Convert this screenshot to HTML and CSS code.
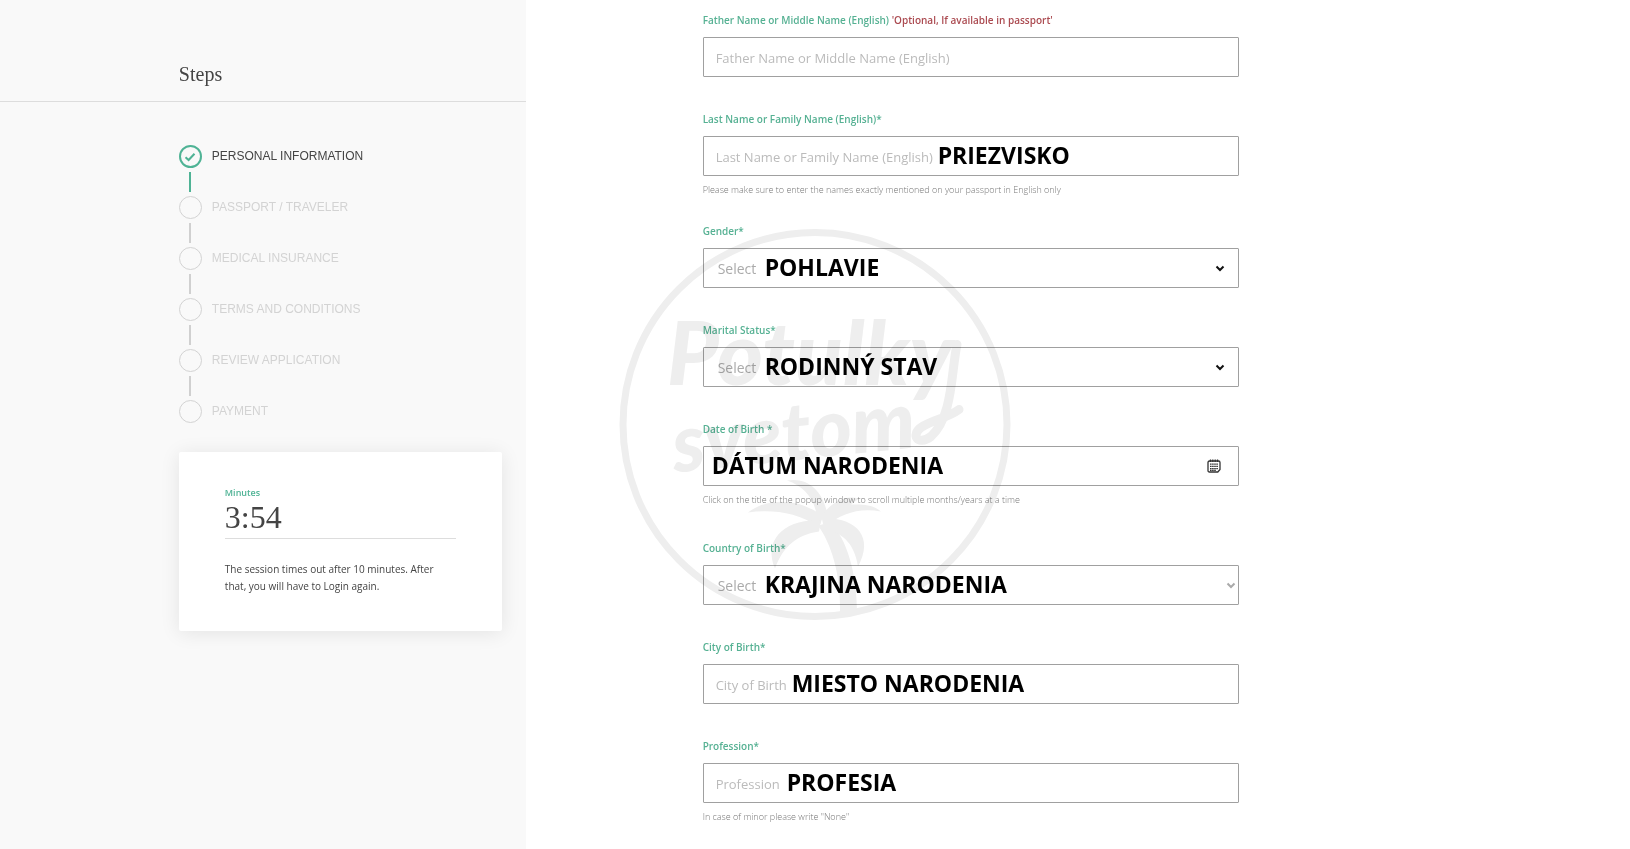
FILE: index.html
```html
<!DOCTYPE html>
<html lang="en">
<head>
<meta charset="utf-8">
<title>Personal Information</title>
<link rel="stylesheet" href="styles.css">
</head>
<body>
<div class="page">
  <aside class="sidebar">
    <header class="sidebar-header"><h1 class="sidebar-title">Steps</h1></header>
    <div class="sidebar-body">
      <ol class="steps">
        <li class="step step-active">
          <span class="step-dot"><svg class="step-check" viewBox="0 0 12 10"><path d="M1.5 5.2 4.6 8 10.5 1.8"/></svg></span>
          <span class="step-name">PERSONAL INFORMATION</span>
        </li>
        <li class="step"><span class="step-dot"></span><span class="step-name">PASSPORT / TRAVELER</span></li>
        <li class="step"><span class="step-dot"></span><span class="step-name">MEDICAL INSURANCE</span></li>
        <li class="step"><span class="step-dot"></span><span class="step-name">TERMS AND CONDITIONS</span></li>
        <li class="step"><span class="step-dot"></span><span class="step-name">REVIEW APPLICATION</span></li>
        <li class="step"><span class="step-dot"></span><span class="step-name">PAYMENT</span></li>
      </ol>
      <section class="timer">
        <div class="timer-label">Minutes</div>
        <div class="timer-value">3:54</div>
        <p class="timer-note">The session times out after 10 minutes. After that, you will have to Login again.</p>
      </section>
    </div>
  </aside>

  <main class="content">
    <form class="form">
      <div class="field">
        <label class="label" for="father">Father Name or Middle Name (English) <span class="optional">'Optional, If available in passport'</span></label>
        <div class="control"><input class="input" id="father" type="text" placeholder="Father Name or Middle Name (English)"></div>
      </div>
      <div class="field field-tight">
        <label class="label" for="last">Last Name or Family Name (English)*</label>
        <div class="control"><input class="input" id="last" type="text" placeholder="Last Name or Family Name (English)"><span class="note note-last">PRIEZVISKO</span></div>
        <p class="hint">Please make sure to enter the names exactly mentioned on your passport in English only</p>
      </div>
      <div class="field">
        <label class="label" for="gender">Gender*</label>
        <div class="control">
          <select class="input select" id="gender"><option>Select</option></select><span class="note note-select">POHLAVIE</span>
          <svg class="chevron" viewBox="0 0 10 7"><path d="M1.5 1.5 5 5 8.5 1.5"/></svg>
        </div>
      </div>
      <div class="field">
        <label class="label" for="marital">Marital Status*</label>
        <div class="control">
          <select class="input select" id="marital"><option>Select</option></select><span class="note note-select">RODINNÝ STAV</span>
          <svg class="chevron" viewBox="0 0 10 7"><path d="M1.5 1.5 5 5 8.5 1.5"/></svg>
        </div>
      </div>
      <div class="field field-hinted">
        <label class="label" for="dob">Date of Birth *</label>
        <div class="control">
          <input class="input" id="dob" type="text"><span class="note note-date">DÁTUM NARODENIA</span>
          <button class="calendar" type="button" aria-label="Open calendar">
            <svg class="calendar-icon" viewBox="0 0 14 14">
              <path class="calendar-frame" d="M2.5 2h9Q13 2 13 3.500V10.500L10.800 13H2.500Q1 13 1 11.500V3.500Q1 2 2.500 2Z"/>
              <path class="calendar-frame" d="M3.500 .5v2.500M5.800 .5v2.500M8.200 .5v2.500M10.500 .5v2.500"/>
              <path class="calendar-days" d="M3 5.200h8M3 7.400h8M3 9.600h8M3 11.300h6"/>
            </svg>
          </button>
        </div>
        <p class="hint">Click on the title of the popup window to scroll multiple months/years at a time</p>
      </div>
      <div class="field">
        <label class="label" for="country">Country of Birth*</label>
        <div class="control">
          <select class="input select" id="country"><option>Select</option></select><span class="note note-select">KRAJINA NARODENIA</span>
          <svg class="chevron chevron-edge" viewBox="0 0 10 7"><path d="M1.5 1.5 5 5 8.5 1.5"/></svg>
        </div>
      </div>
      <div class="field">
        <label class="label" for="city">City of Birth*</label>
        <div class="control"><input class="input" id="city" type="text" placeholder="City of Birth"><span class="note note-city">MIESTO NARODENIA</span></div>
      </div>
      <div class="field">
        <label class="label" for="profession">Profession*</label>
        <div class="control"><input class="input" id="profession" type="text" placeholder="Profession"><span class="note note-profession">PROFESIA</span></div>
        <p class="hint">In case of minor please write "None"</p>
      </div>
    </form>
  </main>

  <svg class="watermark" viewBox="0 0 392 392" aria-hidden="true">
    <circle class="watermark-ring" cx="196" cy="196" r="192"/>
    <text class="watermark-text" x="48" y="156">Potulky</text>
    <text class="watermark-text watermark-text-small" x="56" y="244" transform="rotate(-6 56 244)">svetom</text>
    <path class="watermark-swash" d="M338 116C332 144 334 188 312 208C298 218 292 206 302 199C314 191 328 190 340 181"/>
    <path d="M199 297C212 315 222 345 221 384L238 384C238 345 228 310 211 294Z"/>
    <path d="M168 252C190 248 206 264 209 290L198 291C197 272 186 258 168 252Z"/>
    <path d="M129 284C150 268 182 270 204 288L200 299C178 283 152 281 129 284Z"/>
    <path d="M156 340C144 312 165 290 202 292L200 303C178 306 164 318 156 340Z"/>
    <path d="M262 283C252 275 242 276 232 276L240 270C226 266 212 274 202 288L207 298C222 285 240 279 262 283Z"/>
    <path d="M203 290C236 288 256 308 239 338C236 318 226 304 205 301Z"/>
  </svg>
</div>
</body>
</html>
```
FILE: styles.css
```css
* { box-sizing: border-box; }

body {
  margin: 0;
  background: #fff;
  font-family: "Open Sans", "Noto Sans", sans-serif;
  color: #444;
}

.page {
  position: relative;
  display: grid;
  grid-template-columns: 526fr 1104fr;
  min-height: 100vh;
}

.sidebar { background: #f9f9f9; }

.sidebar-header {
  padding: 62px 0 15px 34%;
  border-bottom: 1px solid #ddd;
}

.sidebar-title {
  margin: 0;
  font: 400 20px/24px "Liberation Serif", serif;
  color: #444;
}

.sidebar-body { padding: 43px 24px 0 34%; }

.steps {
  display: grid;
  gap: 28px;
  margin: 0 0 29px;
  padding: 0;
  list-style: none;
}

.step {
  position: relative;
  display: flex;
  align-items: center;
  gap: 10px;
  color: #d3d3d3;
}

.step-dot {
  display: grid;
  place-items: center;
  width: 23px;
  height: 23px;
  border: 1px solid #d3d3d3;
  border-radius: 50%;
}

.step:not(:last-child)::after {
  content: "";
  position: absolute;
  left: 10px;
  top: 27px;
  width: 2px;
  height: 20px;
  background: #d0d0d0;
}

.step-name {
  padding-bottom: 2px;
  font: 12px/20px "Liberation Sans", sans-serif;
}

.step-active { color: #444; }
.step-active .step-dot { border: 2px solid #4fb395; }
.step.step-active::after { background: #4fb395; }

.step-check {
  width: 12px;
  height: 10px;
  fill: none;
  stroke: #4fb395;
  stroke-width: 2;
}

.timer {
  padding: 33px 46px 36px;
  background: #fff;
  border-radius: 2px;
  box-shadow: 0 2px 20px rgba(0, 0, 0, 0.09);
}

.timer-label {
  font-size: 9px;
  font-weight: 600;
  line-height: 16px;
  color: #4fb395;
}

.timer-value {
  padding-bottom: 5px;
  border-bottom: 1px solid #ddd;
  font: 32px/32px "Liberation Serif", serif;
}

.timer-note {
  margin: 22px 0 0;
  font-size: 10px;
  line-height: 17px;
}

.form {
  width: 48.6%;
  margin-left: 16%;
  padding-top: 12px;
}

.field { margin-bottom: 34px; }
.field-tight { margin-bottom: 25px; }
.field-hinted { margin-bottom: 32px; }
.field:last-child { margin-bottom: 0; }

.label {
  display: block;
  margin-bottom: 9px;
  font-size: 10px;
  font-weight: 600;
  line-height: 16px;
  color: #56b193;
}

.optional { color: #ab4a50; }

.control { position: relative; }

.input {
  display: block;
  width: 100%;
  height: 40px;
  padding: 1px 12px 0;
  border: 1px solid #a0a0a0;
  border-radius: 1px;
  background: #fff;
  font: 13px "Open Sans", sans-serif;
  color: #aaa;
}

.input::placeholder { color: #bbb; opacity: 1; }

.select {
  padding: 0 14px;
  font-size: 14px;
  appearance: none;
}

.note {
  position: absolute;
  top: 3px;
  font-size: 23px;
  font-weight: 700;
  line-height: 32px;
  color: #000;
  white-space: nowrap;
  pointer-events: none;
}

.note-last { left: 235px; }
.note-select { left: 62px; }
.note-date { left: 9px; }
.note-city { left: 89px; }
.note-profession { left: 84px; }

.chevron {
  position: absolute;
  right: 14px;
  top: 17px;
  width: 10px;
  height: 7px;
  fill: none;
  stroke: #111;
  stroke-width: 2;
  pointer-events: none;
}

.chevron-edge {
  right: 3px;
  stroke: #aaa;
}

.calendar {
  position: absolute;
  right: 18px;
  top: 13px;
  padding: 0;
  border: 0;
  background: none;
}

.calendar-icon {
  display: block;
  width: 14px;
  height: 14px;
  fill: none;
  stroke: #333;
}

.calendar-frame { stroke-width: 1.3; }
.calendar-days { stroke-width: 1.3; stroke-dasharray: 1.6 0.5; }

.hint {
  margin: 6px 0 0;
  font-size: 9px;
  font-weight: 300;
  line-height: 16px;
  color: #777;
}

.watermark {
  position: absolute;
  inset: 0;
  width: 392px;
  height: 100%;
  margin: 0 auto;
  fill: #eee;
  mix-blend-mode: multiply;
  pointer-events: none;
}

.watermark-ring,
.watermark-swash {
  fill: none;
  stroke: #eee;
  stroke-width: 7;
}

.watermark-swash {
  stroke-width: 9;
  stroke-linecap: round;
}

.watermark-text { font: italic 900 88px Lato, sans-serif; }
.watermark-text-small { font-size: 80px; }
```
